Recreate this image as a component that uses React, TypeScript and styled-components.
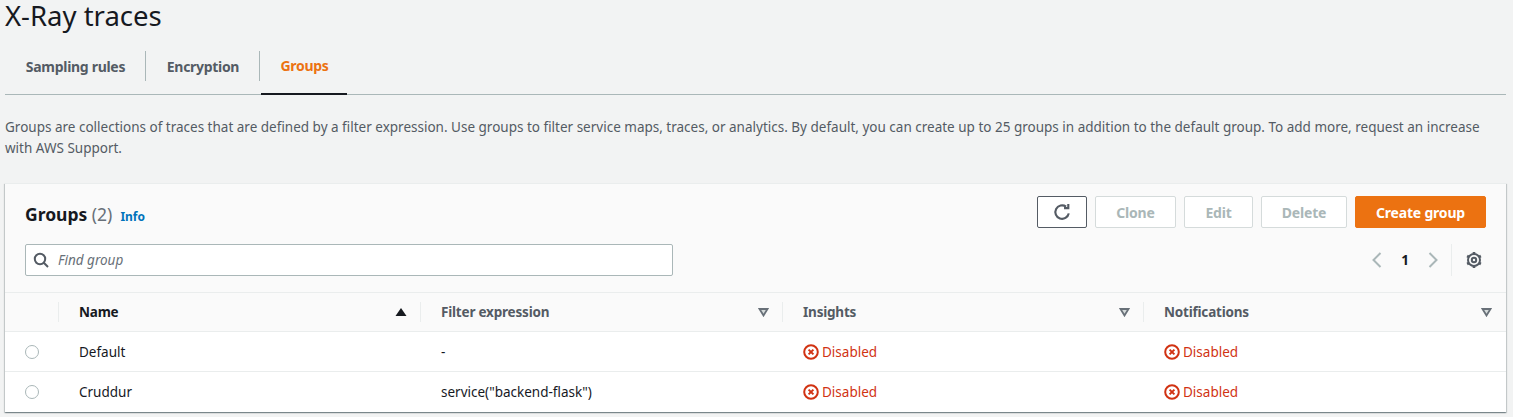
import React from 'react';
import styled, { createGlobalStyle } from 'styled-components';

const GlobalStyle = createGlobalStyle`
  html, body {
    margin: 0;
    padding: 0;
    background: #f2f3f3;
    font-family: "Noto Sans", "Open Sans", sans-serif;
    color: #16191f;
  }
  * {
    box-sizing: border-box;
  }
`;

const Page = styled.div`
  width: 1513px;
  height: 417px;
  overflow: hidden;
  padding: 0 7px 0 5px;
`;

const Title = styled.h1`
  margin: 0;
  height: 45px;
  padding-top: 1px;
  font-size: 27.5px;
  line-height: 30px;
  font-weight: 400;
  color: #16191f;
`;

const TabBar = styled.div`
  display: flex;
  height: 50px;
  border-bottom: 1px solid #aab7b8;
`;

const Tab = styled.div<{ $active?: boolean; $width: number }>`
  display: flex;
  align-items: center;
  justify-content: center;
  width: ${({ $width }) => $width}px;
  height: 50px;
  padding: 0 0 8px 1px;
  font-size: 14px;
  font-weight: 700;
  letter-spacing: -0.3px;
  color: ${({ $active }) => ($active ? '#ec7211' : '#545b64')};
  border-bottom: ${({ $active }) => ($active ? '2px solid #16191f' : '0')};
`;

const TabDivider = styled.div`
  width: 1px;
  height: 30px;
  margin-top: 6px;
  background: #aab7b8;
`;

const ActiveGap = styled.div`
  width: 1px;
`;

const Description = styled.p`
  margin: 22px 0 24px;
  height: 42px;
  font-size: 13.5px;
  line-height: 21px;
  color: #545b64;
`;

const Card = styled.section`
  width: 1501px;
  height: 229px;
  background: #ffffff;
  border-top: 1px solid #eaeded;
  box-shadow: 0 1px 1px 0 rgba(0, 28, 36, 0.3), 1px 1px 1px 0 rgba(0, 28, 36, 0.15), -1px 1px 1px 0 rgba(0, 28, 36, 0.15);
`;

const CardHeader = styled.div`
  height: 108px;
  background: #fafafa;
  padding: 12px 20px 0;
`;

const HeaderRow = styled.div`
  display: flex;
  justify-content: space-between;
  height: 48px;
`;

const Heading = styled.div`
  display: flex;
  align-items: baseline;
  gap: 8px;
  padding-top: 6px;
  font-size: 17.5px;
  line-height: 24px;
  font-weight: 700;
`;

const Count = styled.span`
  font-weight: 400;
  color: #687078;
`;

const InfoLink = styled.a`
  font-size: 12px;
  font-weight: 700;
  color: #0073bb;
`;

const Actions = styled.div`
  display: flex;
  gap: 8px;
  height: 32px;
`;

const Button = styled.button<{ $primary?: boolean; $width: number }>`
  display: flex;
  align-items: center;
  justify-content: center;
  width: ${({ $width }) => $width}px;
  height: 32px;
  padding: 0;
  border-radius: 2px;
  font-family: inherit;
  font-size: 14px;
  font-weight: 700;
  letter-spacing: -0.2px;
  border: 1px solid ${({ $primary }) => ($primary ? '#ec7211' : '#d5dbdb')};
  background: ${({ $primary }) => ($primary ? '#ec7211' : '#ffffff')};
  color: ${({ $primary }) => ($primary ? '#ffffff' : '#aab7b8')};
`;

const RefreshButton = styled(Button)`
  border-color: #545b64;
  color: #545b64;
`;

const ToolRow = styled.div`
  display: flex;
  justify-content: space-between;
  align-items: center;
  height: 32px;
`;

const Search = styled.div`
  display: flex;
  align-items: center;
  gap: 9px;
  width: 648px;
  height: 32px;
  padding-left: 7px;
  background: #ffffff;
  border: 1px solid #aab7b8;
  border-radius: 2px;
  color: #545b64;
`;

const SearchInput = styled.input`
  flex: 1;
  border: 0;
  outline: 0;
  padding: 0;
  background: transparent;
  font-family: inherit;
  font-size: 13.5px;
  font-style: italic;
  &::placeholder {
    color: #687078;
    opacity: 1;
  }
`;

const Pager = styled.div`
  display: flex;
  align-items: center;
  height: 32px;
  margin-right: -8px;
  color: #aab7b8;
`;

const PageNumber = styled.span`
  width: 40px;
  text-align: center;
  font-size: 13.5px;
  font-weight: 700;
  color: #16191f;
`;

const PagerDivider = styled.div`
  width: 1px;
  height: 32px;
  margin: 0 13px 0 10px;
  background: #eaeded;
`;

const GearWrap = styled.span`
  display: flex;
  margin-right: 11px;
`;

const Row = styled.div<{ $header?: boolean }>`
  display: grid;
  grid-template-columns: 54px 362px 362px 361px 362px;
  align-items: center;
  height: ${({ $header }) => ($header ? '39px' : '40px')};
  background: ${({ $header }) => ($header ? '#fafafa' : '#ffffff')};
  border-top: 1px solid #eaeded;
`;

const HeadCell = styled.div<{ $dim?: boolean; $divider?: boolean }>`
  display: flex;
  align-items: center;
  justify-content: space-between;
  height: 20px;
  margin-left: -1px;
  padding: 0 14px 0 20px;
  font-size: 13.5px;
  font-weight: 700;
  letter-spacing: -0.2px;
  color: ${({ $dim }) => ($dim ? '#545b64' : '#16191f')};
  border-left: ${({ $divider }) => ($divider ? '1px solid #eaeded' : '0')};
`;

const Cell = styled.div`
  display: flex;
  align-items: center;
  gap: 3px;
  padding-left: 20px;
  font-size: 13.5px;
  color: #16191f;
`;

const StatusCell = styled(Cell)`
  color: #d13212;
`;

const RadioCell = styled.div`
  padding-left: 20px;
  display: flex;
`;

const Radio = styled.span`
  width: 14px;
  height: 14px;
  border: 1px solid #aab7b8;
  border-radius: 50%;
  background: #ffffff;
`;

const RefreshIcon = () => (
  <svg width="18" height="18" viewBox="0 0 16 16" fill="none" stroke="currentColor" strokeWidth="1.9">
    <path d="M14 9.2A6 6 0 1 1 11.6 3.2" />
    <path d="M13.6 0.8v3.8H9.8" />
  </svg>
);

const SearchIcon = () => (
  <svg width="16" height="16" viewBox="0 0 16 16" fill="none" stroke="currentColor" strokeWidth="2">
    <circle cx="7" cy="7" r="5.2" />
    <path d="M10.8 10.8L15 15" />
  </svg>
);

const Chevron = ({ left }: { left?: boolean }) => (
  <svg width="16" height="18" viewBox="0 0 16 18" fill="none" stroke="currentColor" strokeWidth="2">
    <path d={left ? 'M11.5 2L4.5 9l7 7' : 'M4.5 2l7 7-7 7'} />
  </svg>
);

const GearIcon = () => (
  <svg width="18" height="18" viewBox="0 0 18 18" fill="none" stroke="#545b64">
    <circle cx="9" cy="9" r="2.2" strokeWidth="2" />
    <circle cx="9" cy="9" r="6" strokeWidth="2" />
    <path
      d="M9 1v2.5M9 14.5V17M2.1 5l2.2 1.2M13.7 11.8l2.2 1.2M2.1 13l2.2-1.2M13.7 6.2L15.9 5"
      strokeWidth="2.6"
    />
  </svg>
);

const SortUp = () => (
  <svg width="12" height="8" viewBox="0 0 12 8" fill="#16191f">
    <path d="M6 0l5.5 8H.5z" />
  </svg>
);

const SortNone = () => (
  <svg width="11" height="9" viewBox="0 0 11 9" fill="#d5dbdb" stroke="#687078" strokeWidth="1.8">
    <path d="M1.5 1h8L5.5 7.5z" />
  </svg>
);

const ErrorIcon = () => (
  <svg width="16" height="16" viewBox="0 0 16 16" fill="none" stroke="#d13212" strokeWidth="2">
    <circle cx="8" cy="8" r="6.8" />
    <path d="M5.6 5.6l4.8 4.8M10.4 5.6l-4.8 4.8" />
  </svg>
);

const columns = ['Filter expression', 'Insights', 'Notifications'];

const groups = [
  { name: 'Default', filter: '-' },
  { name: 'Cruddur', filter: 'service("backend-flask")' },
];

const App = () => {
  return (
    <Page>
      <GlobalStyle />
      <Title>X-Ray traces</Title>
      <TabBar>
        <Tab $width={140}>Sampling rules</Tab>
        <TabDivider />
        <Tab $width={113}>Encryption</Tab>
        <TabDivider />
        <ActiveGap />
        <Tab $active $width={86}>Groups</Tab>
      </TabBar>
      <Description>
        Groups are collections of traces that are defined by a filter expression. Use groups to filter service maps, traces, or analytics. By default, you can create up to 25 groups in addition to the default group. To add more, request an increase with AWS Support.
      </Description>
      <Card>
        <CardHeader>
          <HeaderRow>
            <Heading>
              <span>Groups <Count>(2)</Count></span>
              <InfoLink>Info</InfoLink>
            </Heading>
            <Actions>
              <RefreshButton $width={50}><RefreshIcon /></RefreshButton>
              <Button $width={81}>Clone</Button>
              <Button $width={69}>Edit</Button>
              <Button $width={86}>Delete</Button>
              <Button $primary $width={131}>Create group</Button>
            </Actions>
          </HeaderRow>
          <ToolRow>
            <Search>
              <SearchIcon />
              <SearchInput placeholder="Find group" readOnly />
            </Search>
            <Pager>
              <Chevron left />
              <PageNumber>1</PageNumber>
              <Chevron />
              <PagerDivider />
              <GearWrap><GearIcon /></GearWrap>
            </Pager>
          </ToolRow>
        </CardHeader>
        <Row $header>
          <HeadCell />
          <HeadCell $divider>Name<SortUp /></HeadCell>
          {columns.map((column) => (
            <HeadCell $dim $divider key={column}>{column}<SortNone /></HeadCell>
          ))}
        </Row>
        {groups.map((group) => (
          <Row key={group.name}>
            <RadioCell><Radio /></RadioCell>
            <Cell>{group.name}</Cell>
            <Cell>{group.filter}</Cell>
            <StatusCell><ErrorIcon />Disabled</StatusCell>
            <StatusCell><ErrorIcon />Disabled</StatusCell>
          </Row>
        ))}
      </Card>
    </Page>
  );
};

export default App;
